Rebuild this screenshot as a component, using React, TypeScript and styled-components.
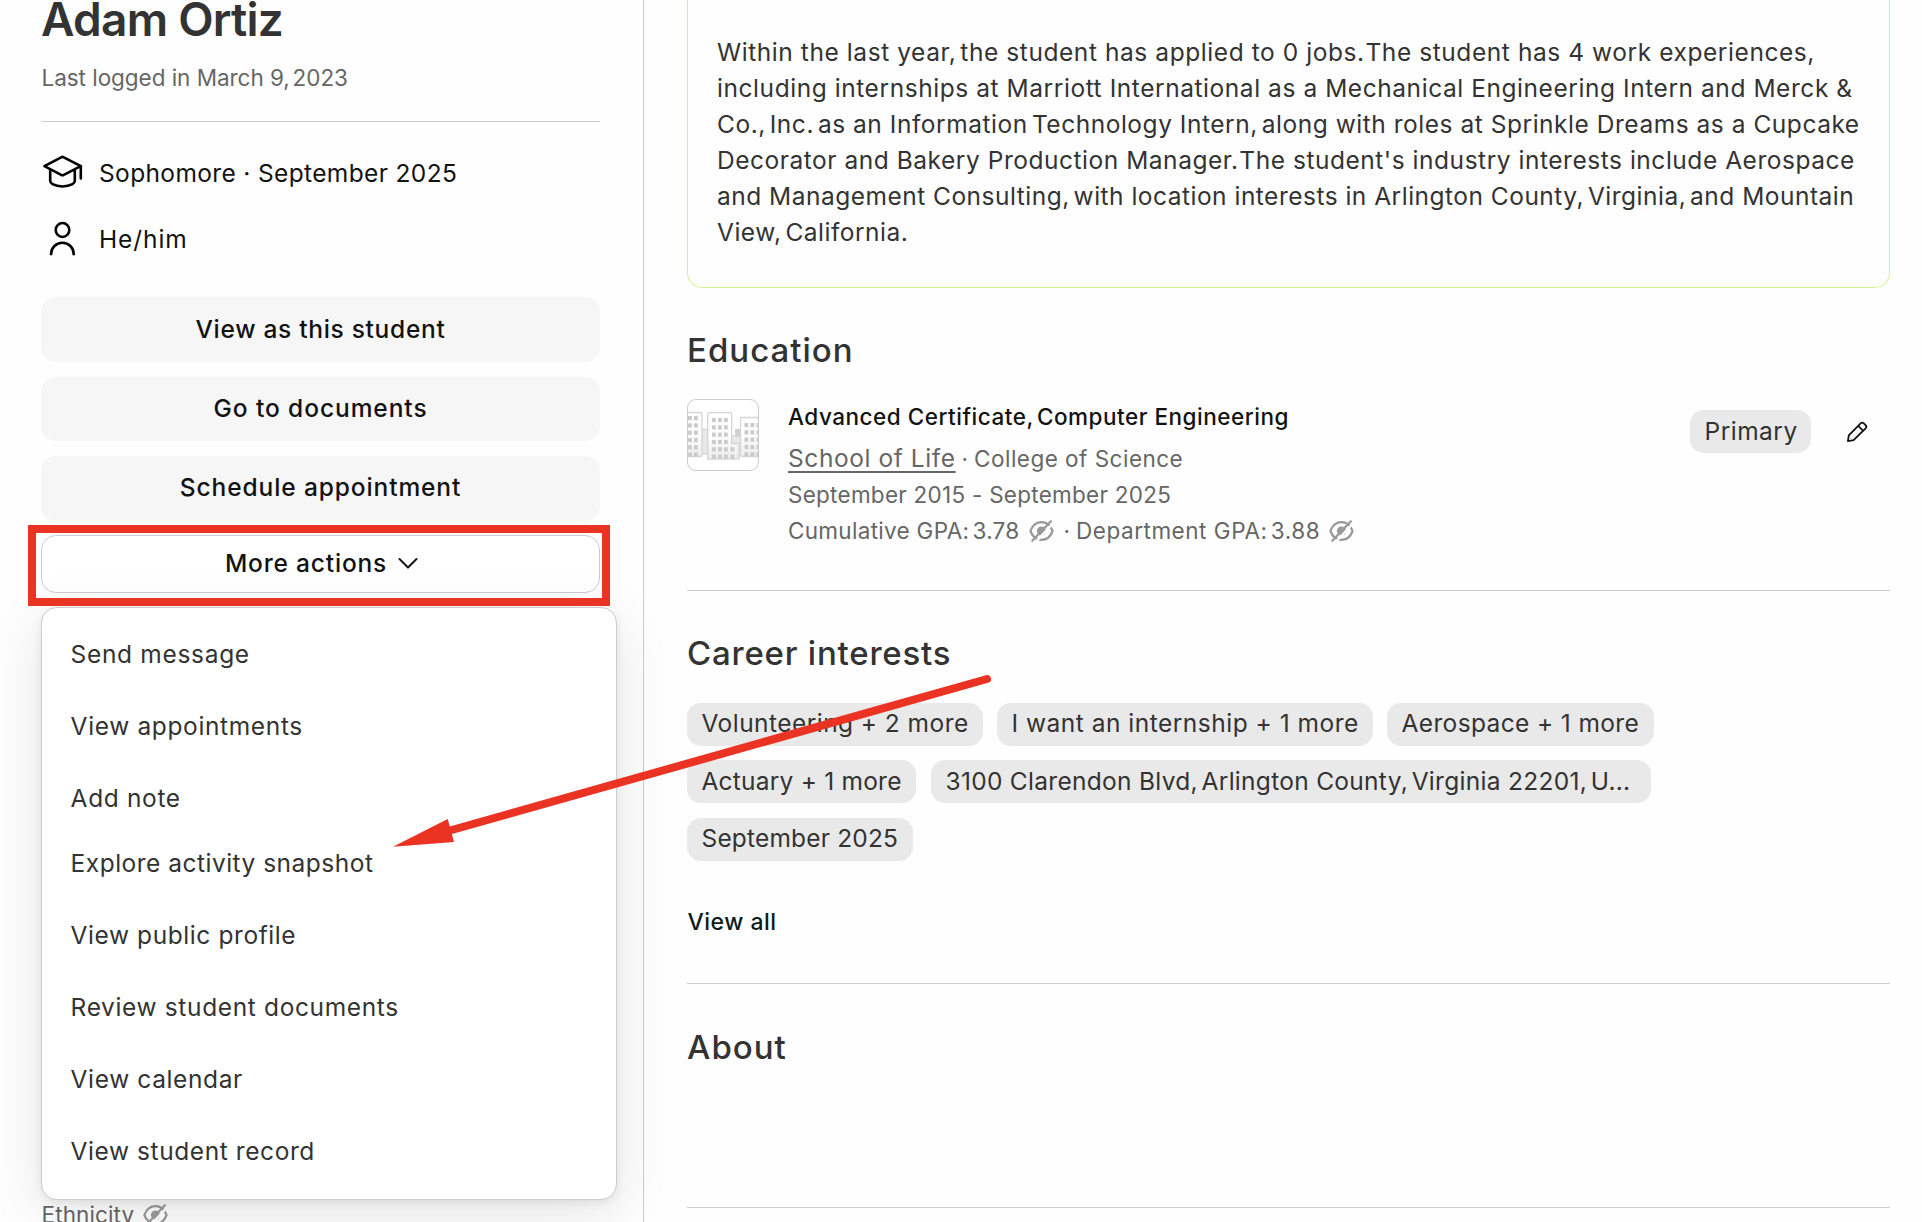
import React from "react";
import styled, { createGlobalStyle } from "styled-components";

const GlobalStyle = createGlobalStyle`
  *, *::before, *::after { box-sizing: border-box; }
  body { margin: 0; background: #fefefe; overflow: hidden; }
`;

const Page = styled.div`
  position: relative;
  display: flex;
  width: 1922px;
  height: 1222px;
  overflow: hidden;
  background: #fefefe;
  color: #333;
  font-family: Inter, "Liberation Sans", sans-serif;
  font-size: 24.5px;
`;

/* ---------- text ---------- */

const Spaced = styled.span<{ $ls: number }>`
  letter-spacing: ${(p) => p.$ls}px;
  white-space: pre;
`;

const TightSpace = styled.span<{ $ls: number }>`
  letter-spacing: ${(p) => p.$ls}px;
`;

/* Text whose spaces after punctuation, and before a capital T, are kerned closer than the word gaps. */
function Txt({ ls, children }: { ls: number; children: string }) {
  const parts = children.split(/(?<=[,.:]) | (?=T)/);
  return (
    <Spaced $ls={ls}>
      {parts.map((part, i) => {
        const afterPoint = i > 0 && /[,.:]$/.test(parts[i - 1]);
        const kern = (afterPoint ? 3.5 : 0) + (part.startsWith("T") ? 3.2 : 0);
        return (
          <React.Fragment key={i}>
            {i > 0 && <TightSpace $ls={ls - kern}> </TightSpace>}
            {part}
          </React.Fragment>
        );
      })}
    </Spaced>
  );
}

/* ---------- sidebar ---------- */

const Sidebar = styled.aside`
  display: flex;
  flex-direction: column;
  flex: none;
  width: 644px;
  height: 1222px;
  padding: 0 43px 0 41px;
  border-right: 1px solid #ccc;
`;

const Name = styled.h1`
  margin: -9px 0 0;
  font-size: 46px;
  line-height: 56px;
  font-weight: 600;
`;

const LastLogin = styled.p`
  margin: 15px 0 0 0.5px;
  font-size: 22.5px;
  line-height: 32px;
  color: #666;
`;

const Rule = styled.hr<{ $top: number }>`
  flex: none;
  width: 100%;
  height: 1px;
  margin: ${(p) => p.$top}px 0 0;
  border: 0;
  background: #ccc;
`;

const Fact = styled.div<{ $top: number }>`
  display: flex;
  gap: 16px;
  height: 40px;
  margin-top: ${(p) => p.$top}px;
  line-height: 40px;
  color: #121212;
`;

const Actions = styled.div`
  display: flex;
  flex-direction: column;
  gap: 15px;
  margin-top: 38px;
`;

const ActionButton = styled.button<{ $h: number; $drop?: number }>`
  display: flex;
  align-items: center;
  justify-content: center;
  width: 559px;
  height: ${(p) => p.$h}px;
  padding: 0 0 ${(p) => p.$drop ?? 0}px;
  border: 0;
  border-radius: 15px;
  background: #f6f6f6;
  color: #121212;
  font: inherit;
  font-weight: 500;
`;

const MoreWrap = styled.div`
  position: relative;
  margin-top: 14px;
`;

const MoreButton = styled(ActionButton)`
  gap: 11px;
  padding-left: 2px;
  border: 1px solid #ccc;
  background: #fff;
`;

const Highlight = styled.div`
  position: absolute;
  z-index: 2;
  left: -13px;
  top: -10px;
  width: 582px;
  height: 81px;
  border: 8px solid #eb3324;
`;

const Menu = styled.ul`
  position: absolute;
  z-index: 1;
  left: 0;
  top: 72px;
  width: 576px;
  height: 593px;
  margin: 0;
  padding: 10px 28.6px;
  list-style: none;
  border: 1px solid #ccc;
  border-radius: 16px;
  background: #fff;
  box-shadow: 0 3px 8px rgba(0, 0, 0, 0.08), 0 12px 56px rgba(0, 0, 0, 0.1);
`;

const MenuItem = styled.li<{ $h?: number }>`
  height: ${(p) => p.$h ?? 72}px;
  line-height: 72px;
`;

const FieldLabel = styled.div`
  display: flex;
  align-items: center;
  gap: 9px;
  height: 32px;
  margin: 606px 0 0 0.5px;
  font-size: 22.5px;
  line-height: 32px;
  color: #666;
`;

/* ---------- main column ---------- */

const Main = styled.main`
  display: flex;
  flex-direction: column;
  width: 1278px;
  padding: 0 32px 0 43px;
`;

const Summary = styled.section`
  width: 1203px;
  height: 288px;
  padding: 34px 0 0 29px;
  border: 1px solid #d0f48c;
  border-top: 0;
  border-radius: 0 0 15px 15px;
`;

const Line = styled.div`
  height: 36px;
  line-height: 36px;
`;

const Heading = styled.h2<{ $top?: number }>`
  height: 44px;
  margin: ${(p) => p.$top ?? 40}px 0 0;
  font-size: 33px;
  line-height: 44px;
  font-weight: 550;
`;

const EducationRow = styled.div`
  display: flex;
  align-items: flex-start;
  height: 149px;
  margin-top: 27px;
`;

const Thumb = styled.div`
  width: 72px;
  height: 72px;
  margin-right: 29px;
  overflow: hidden;
  border: 1px solid #ccc;
  border-radius: 9px;
  background: #fff;
`;

const Degree = styled.div`
  height: 41px;
  font-size: 22.5px;
  line-height: 36px;
  font-weight: 500;
  color: #121212;
`;

const Detail = styled.div<{ $h?: number }>`
  display: flex;
  align-items: baseline;
  gap: 6px;
  height: ${(p) => p.$h ?? 36}px;
  font-size: 22.5px;
  line-height: 36px;
  color: #666;
`;

const SchoolLink = styled.a`
  font-size: 24.5px;
  text-decoration: underline;
  text-decoration-thickness: 2px;
  text-underline-offset: 4px;
  text-decoration-skip-ink: none;
`;

const EyeSlot = styled.span`
  align-self: center;
  display: flex;
  margin: 0 4px 0 3px;
`;

const EducationSide = styled.div`
  display: flex;
  align-items: center;
  gap: 35px;
  margin: 11px 22px 0 auto;
`;

const ChipRows = styled.div`
  display: flex;
  flex-direction: column;
  margin-top: 28px;
`;

const ChipRow = styled.div<{ $gap: number; $top: number }>`
  display: flex;
  gap: ${(p) => p.$gap}px;
  margin-top: ${(p) => p.$top}px;
`;

const Chip = styled.span<{ $w: number; $drop?: number }>`
  display: flex;
  align-items: center;
  width: ${(p) => p.$w}px;
  height: 43px;
  padding: 0 0 ${(p) => p.$drop ?? 2}px 14.5px;
  border-radius: 14px;
  background: #e9e9e9;
`;

const ViewAll = styled.a`
  height: 32px;
  margin: 45px 0 0 0.5px;
  font-size: 23px;
  line-height: 32px;
  font-weight: 500;
  color: #0b1a1c;
`;

const ArrowLayer = styled.svg`
  position: absolute;
  z-index: 3;
  left: 0;
  top: 0;
  pointer-events: none;
`;

/* ---------- icons ---------- */

const CapIcon = () => (
  <svg width="42" height="40" viewBox="0 0 42 40" fill="none" stroke="#000" strokeWidth="2.6" strokeLinecap="round" strokeLinejoin="round">
    <path d="M20.2 4.3a2.6 2.6 0 0 1 2.6 0L39.8 13.2 22.8 21.9a2.6 2.6 0 0 1-2.6 0L3.4 13.2Z" />
    <path d="M9.2 17v10.8c0 1.6.8 2.6 2.3 3.4 5.8 3 14.2 3 20 0 1.5-.8 2.3-1.8 2.3-3.4V17" />
    <path d="M39.8 13.2v12.3" />
  </svg>
);

const PersonIcon = () => (
  <svg width="42" height="40" viewBox="0 0 42 40" fill="none" stroke="#000" strokeWidth="2.6">
    <ellipse cx="21.5" cy="11" rx="6.8" ry="7" />
    <path d="M10.1 36.2V35a11.3 11.3 0 0 1 22.6 0v1.2" />
  </svg>
);

const ChevronIcon = () => (
  <svg width="20" height="12" viewBox="0 0 20 12" fill="none" stroke="#121212" strokeWidth="2" strokeLinecap="round" strokeLinejoin="round">
    <path d="M1.5 2 10 10.5 18.5 2" />
  </svg>
);

const EyeOffIcon = () => (
  <svg width="25" height="22" viewBox="0 0 25 22" fill="none" stroke="#999" strokeWidth="2.2" strokeLinecap="round">
    <path d="M1.4 11C3.6 5 7.5 2.2 12.5 2.2S21.4 5 23.6 11C21.4 17 17.5 19.8 12.5 19.8S3.6 17 1.4 11Z" strokeLinejoin="round" />
    <circle cx="12.5" cy="11" r="4.6" fill="#999" stroke="none" />
    <path d="M5.8 23 24.2 3.2" stroke="#fefefe" strokeWidth="2.4" strokeLinecap="butt" />
    <path d="M3.3 20.8 21.9 1.3" />
  </svg>
);

const PencilIcon = () => (
  <svg width="22" height="22" viewBox="0 0 22 22" fill="none" stroke="#121212" strokeWidth="1.8" strokeLinejoin="round">
    <path d="M1.9 20.1 2.8 14.4 14.6 2.4a2.3 2.3 0 0 1 3.2 0l1.8 1.8a2.3 2.3 0 0 1 0 3.2L7.6 19.2Z" />
    <path d="M12.2 4.8 17.2 9.8" />
  </svg>
);

const windowGrid = (x: number, y: number, cols: number, rows: number) =>
  Array.from({ length: cols * rows }, (_, i) => (
    <rect key={`${x}-${i}`} x={x + (i % cols) * 6} y={y + Math.floor(i / cols) * 7.3} width="3.8" height="4.2" />
  ));

const BuildingsIcon = () => (
  <svg width="70" height="70" viewBox="1 1 70 70">
    <defs>
      <linearGradient id="wall" x1="0" y1="0" x2="0" y2="1">
        <stop offset="0.5" stopColor="#fdfdfd" />
        <stop offset="1" stopColor="#ececec" />
      </linearGradient>
    </defs>
    <g fill="url(#wall)" stroke="#d6d6d6" strokeWidth="1.3">
      <rect x="14" y="30.5" width="8" height="24.5" fill="#e8e8e8" />
      <rect x="48" y="30" width="6" height="10" fill="#d0d0d0" stroke="none" />
      <rect x="44" y="37" width="11" height="20" fill="#e8e8e8" />
      <rect x="-4" y="13.5" width="19" height="44" rx="1.5" />
      <rect x="53.5" y="18.5" width="22" height="39" rx="1.5" />
      <path d="M20.7 60V15.2q0-1.5 1.5-1.5h21q1.5 0 1.5 1.5V44.5H52V60Z" />
    </g>
    <g fill="#cbcbcb">
      {windowGrid(1, 17, 2, 6)}
      {windowGrid(25, 19, 3, 6)}
      {windowGrid(43.5, 48.2, 1, 2)}
      {windowGrid(57.5, 24, 3, 5)}
    </g>
  </svg>
);

/* ---------- data ---------- */

const summary: [string, number][] = [
  ["Within the last year, the student has applied to 0 jobs. The student has 4 work experiences,", 0.57],
  ["including internships at Marriott International as a Mechanical Engineering Intern and Merck &", 0.56],
  ["Co., Inc. as an Information Technology Intern, along with roles at Sprinkle Dreams as a Cupcake", 0.53],
  ["Decorator and Bakery Production Manager. The student's industry interests include Aerospace", 0.53],
  ["and Management Consulting, with location interests in Arlington County, Virginia, and Mountain", 0.49],
  ["View, California.", 0.5],
];

const menu: { label: string; ls: number; h?: number }[] = [
  { label: "Send message", ls: 0.68 },
  { label: "View appointments", ls: 0.64 },
  { label: "Add note", ls: 0.64, h: 65 },
  { label: "Explore activity snapshot", ls: 0.49 },
  { label: "View public profile", ls: 0.58 },
  { label: "Review student documents", ls: 0.64 },
  { label: "View calendar", ls: 0.62 },
  { label: "View student record", ls: 0.58 },
];

interface ChipRowData {
  gap: number;
  top: number;
  drop: number;
  chips: { label: string; ls: number; w: number }[];
}

const chipRows: ChipRowData[] = [
  {
    gap: 14,
    top: 0,
    drop: 3.5,
    chips: [
      { label: "Volunteering + 2 more", ls: 0.45, w: 296 },
      { label: "I want an internship + 1 more", ls: 0.5, w: 376 },
      { label: "Aerospace + 1 more", ls: 0.37, w: 267 },
    ],
  },
  {
    gap: 15,
    top: 14,
    drop: 2,
    chips: [
      { label: "Actuary + 1 more", ls: 0.22, w: 229 },
      { label: "3100 Clarendon Blvd, Arlington County, Virginia 22201, U...", ls: 0.29, w: 720 },
    ],
  },
  { gap: 14, top: 15, drop: 3.5, chips: [{ label: "September 2025", ls: 0.18, w: 226 }] },
];

export default function App() {
  return (
    <Page>
      <GlobalStyle />
      <Sidebar>
        <Name><Txt ls={-0.75}>Adam Ortiz</Txt></Name>
        <LastLogin><Txt ls={-0.04}>Last logged in March 9, 2023</Txt></LastLogin>
        <Rule $top={27} />
        <Fact $top={31}>
          <CapIcon />
          <Txt ls={0.36}>Sophomore · September 2025</Txt>
        </Fact>
        <Fact $top={26}>
          <PersonIcon />
          <Txt ls={0.9}>He/him</Txt>
        </Fact>
        <Actions>
          <ActionButton $h={65} $drop={2}><Txt ls={0.7}>View as this student</Txt></ActionButton>
          <ActionButton $h={64} $drop={2}><Txt ls={0.93}>Go to documents</Txt></ActionButton>
          <ActionButton $h={65} $drop={3}><Txt ls={0.89}>Schedule appointment</Txt></ActionButton>
        </Actions>
        <MoreWrap>
          <MoreButton $h={58} $drop={2}>
            <Txt ls={0.82}>More actions</Txt>
            <ChevronIcon />
          </MoreButton>
          <Menu>
            {menu.map((m) => (
              <MenuItem key={m.label} $h={m.h}><Txt ls={m.ls}>{m.label}</Txt></MenuItem>
            ))}
          </Menu>
          <Highlight />
        </MoreWrap>
        <FieldLabel>
          <Txt ls={0.12}>Ethnicity</Txt>
          <EyeOffIcon />
        </FieldLabel>
      </Sidebar>

      <Main>
        <Summary>
          {summary.map(([text, ls]) => (
            <Line key={text}><Txt ls={ls}>{text}</Txt></Line>
          ))}
        </Summary>

        <Heading><Txt ls={1}>Education</Txt></Heading>
        <EducationRow>
          <Thumb><BuildingsIcon /></Thumb>
          <div>
            <Degree><Txt ls={0.52}>Advanced Certificate, Computer Engineering</Txt></Degree>
            <Detail $h={37}>
              <SchoolLink><Txt ls={0.58}>School of Life</Txt></SchoolLink>
              <span>·</span>
              <Txt ls={0.48}>College of Science</Txt>
            </Detail>
            <Detail><Txt ls={0.26}>September 2015 - September 2025</Txt></Detail>
            <Detail>
              <Txt ls={0.3}>Cumulative GPA: 3.78</Txt>
              <EyeSlot><EyeOffIcon /></EyeSlot>
              <span>·</span>
              <Txt ls={0.53}>Department GPA: 3.88</Txt>
              <EyeSlot><EyeOffIcon /></EyeSlot>
            </Detail>
          </div>
          <EducationSide>
            <Chip $w={121}><Txt ls={0.48}>Primary</Txt></Chip>
            <PencilIcon />
          </EducationSide>
        </EducationRow>
        <Rule $top={42} />

        <Heading><Txt ls={0.78}>Career interests</Txt></Heading>
        <ChipRows>
          {chipRows.map((row, i) => (
            <ChipRow key={i} $gap={row.gap} $top={row.top}>
              {row.chips.map((c) => (
                <Chip key={c.label} $w={c.w} $drop={row.drop}><Txt ls={c.ls}>{c.label}</Txt></Chip>
              ))}
            </ChipRow>
          ))}
        </ChipRows>
        <ViewAll><Txt ls={0.5}>View all</Txt></ViewAll>
        <Rule $top={45} />

        <Heading $top={41}><Txt ls={1}>About</Txt></Heading>
        <Rule $top={138} />
      </Main>

      <ArrowLayer width="1922" height="1222" viewBox="0 0 1922 1222">
        <path d="M450 830.5 987 679" stroke="#eb3324" strokeWidth="8" strokeLinecap="round" fill="none" />
        <path d="M393 846.7 447.7 819 454 842Z" fill="#eb3324" />
      </ArrowLayer>
    </Page>
  );
}
